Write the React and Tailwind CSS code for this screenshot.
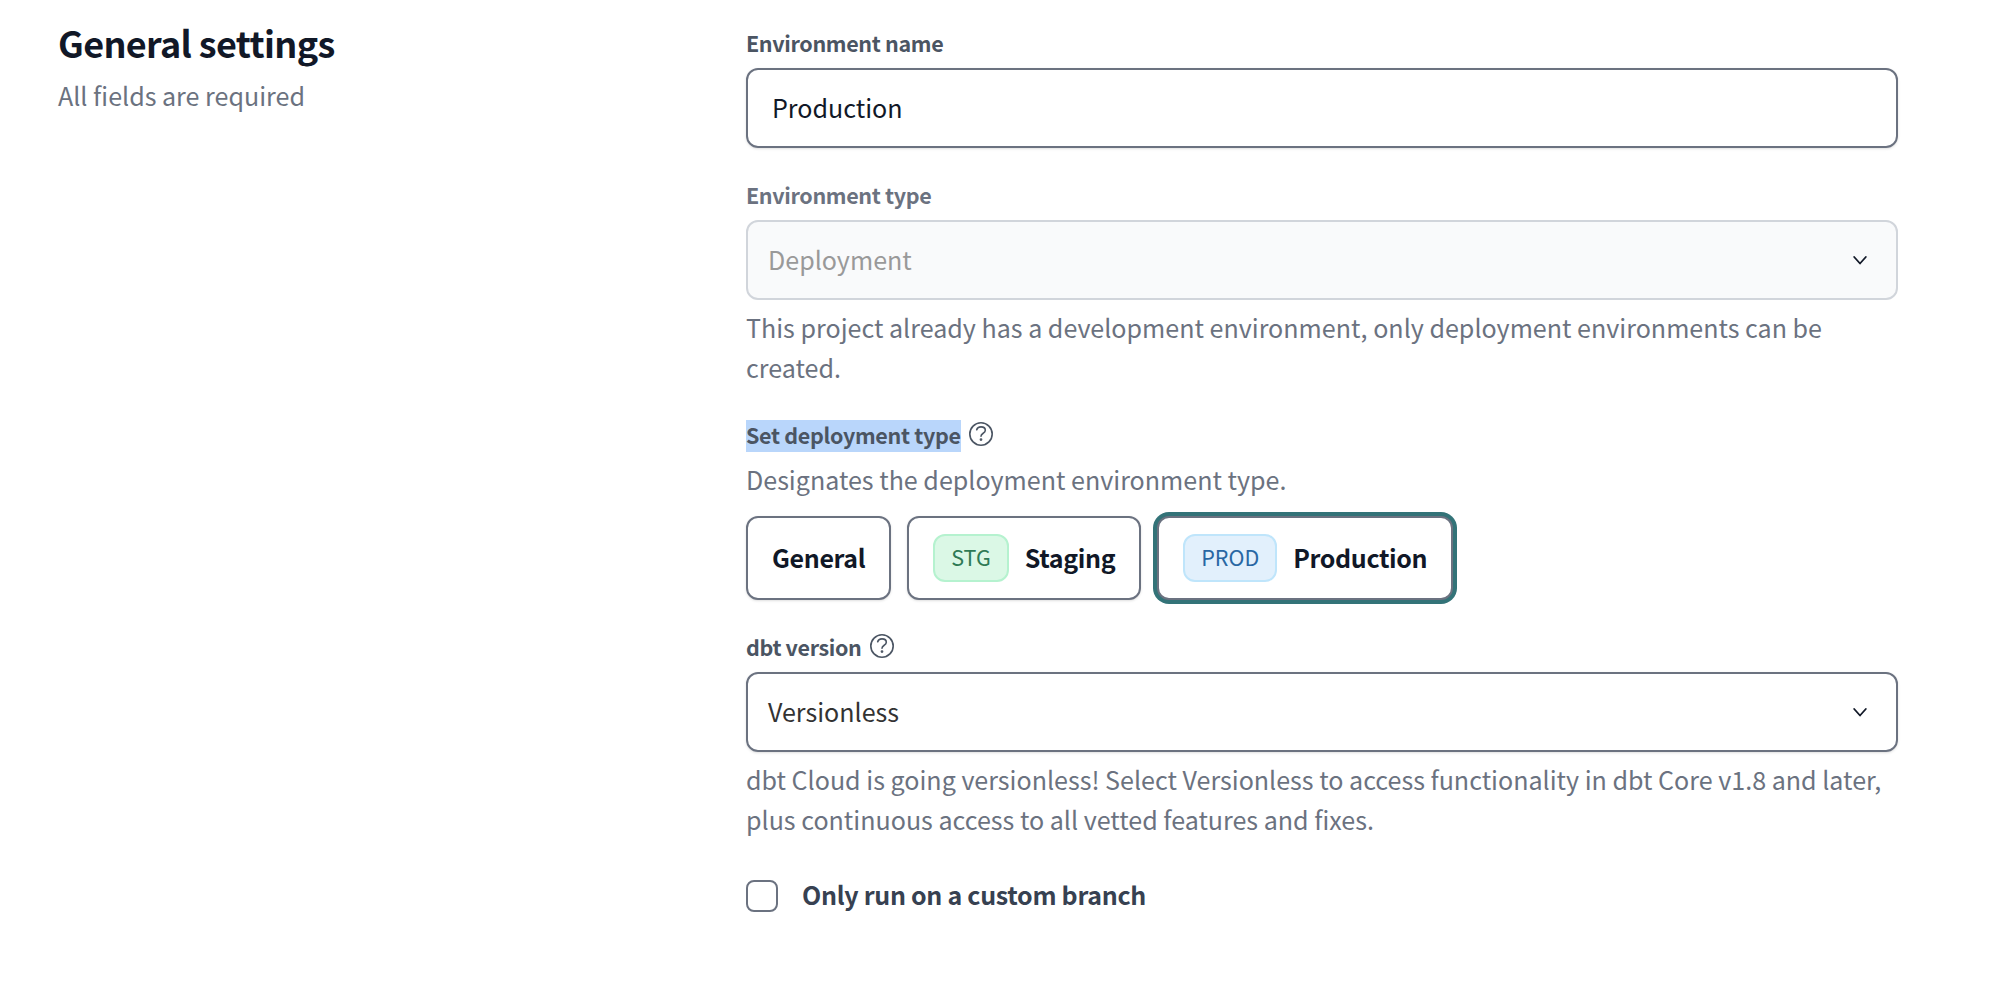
import { useState } from "react";

function HelpIcon() {
  return (
    <svg
      className="size-[24px] shrink-0 text-[#4b5563]"
      viewBox="0 0 24 24"
      fill="none"
      stroke="currentColor"
      strokeWidth="1.6"
      strokeLinecap="round"
      strokeLinejoin="round"
    >
      <circle cx="12" cy="12" r="11.2" />
      <path d="M7.700 7.800C8.200 5.800 9.800 4.900 12 4.900c2.500 0 4.300 1.200 4.300 3.400 0 3.200-4.300 2.600-4.300 5.900" />
      <circle cx="12" cy="17.600" r="0.6" fill="currentColor" />
    </svg>
  );
}

function Chevron() {
  return (
    <svg
      className="h-[10px] w-[14px] shrink-0 text-[#111827]"
      viewBox="0 0 14 10"
      fill="none"
      stroke="currentColor"
      strokeWidth="1.8"
      strokeLinecap="round"
      strokeLinejoin="round"
    >
      <path d="M1.200 2 7 8.500l5.800-6.500" />
    </svg>
  );
}

function Label({ children, className = "text-[#4b5563]" }) {
  return (
    <div className={`h-[40px] text-[21.5px] leading-[29px] font-bold tracking-[-0.35px] ${className}`}>
      {children}
    </div>
  );
}

function TypeButton({ label, badge, badgeClass, selected, onClick }) {
  return (
    <button
      type="button"
      onClick={onClick}
      className={`flex h-[84px] items-center gap-[16px] rounded-[12px] border-2 border-[#6b7280] bg-white px-[24px] text-[#111827] ${
        selected ? "ring-4 ring-[#337378]" : "shadow-sm"
      }`}
    >
      {badge && (
        <span
          className={`flex h-[48px] items-start rounded-[12px] border-2 px-[16px] text-[21.5px] leading-[41px] ${badgeClass}`}
        >
          {badge}
        </span>
      )}
      <span className="pb-[2px] text-[25px] leading-[40px] font-bold tracking-[-0.36px]">{label}</span>
    </button>
  );
}

export default function App() {
  const [type, setType] = useState("Production");
  const [checked, setChecked] = useState(false);

  return (
    <main className="flex h-[984px] w-[2002px] overflow-hidden bg-white pl-[58px] font-['Noto_Sans_CJK_SC',sans-serif] text-[#6b7280]">
      <section className="w-[688px] shrink-0 pt-[18px]">
        <h1 className="text-[36px] leading-[48px] font-bold tracking-[-0.66px] text-[#111827]">General settings</h1>
        <p className="mt-[9px] text-[25.07px] leading-[40px]">All fields are required</p>
      </section>

      <section className="w-[1152px] shrink-0 pt-[28px]">
        <Label>Environment name</Label>
        <div className="h-[80px] rounded-[12px] border-2 border-[#6b7280] px-[24px] text-[25.07px] leading-[74px] text-[#111827] shadow-sm">
          Production
        </div>

        <div className="mt-[32px]">
          <Label className="text-[#6b7280]">Environment type</Label>
          <div className="flex h-[80px] items-center justify-between rounded-[12px] border-2 border-[#d1d5db] bg-[#f9fafb] pr-[29px] pl-[20px]">
            <span className="pb-[2px] text-[25.07px] leading-[74px] text-[#999999]">Deployment</span>
            <Chevron />
          </div>
          <p className="mt-[7px] text-[25.07px] leading-[40px]">
            This project already has a development environment, only deployment environments can be
            <br />
            created.
          </p>
        </div>

        <div className="mt-[33px]">
          <div className="flex h-[39px] items-start gap-[8px]">
            <span className="h-[32px] w-[215px] bg-[#b9d6fb] text-[21.5px] leading-[29px] font-bold tracking-[-0.32px] whitespace-nowrap text-[#4b5563]">
              Set deployment type
            </span>
            <span className="pt-[2px]">
              <HelpIcon />
            </span>
          </div>
          <p className="text-[25.07px] leading-[40px]">Designates the deployment environment type.</p>
          <div className="mt-[17px] flex gap-[16px]">
            <TypeButton label="General" selected={type === "General"} onClick={() => setType("General")} />
            <TypeButton
              label="Staging"
              badge="STG"
              badgeClass="border-[#b5f2cf] bg-[#dbf8e6] text-[#2f7a55]"
              selected={type === "Staging"}
              onClick={() => setType("Staging")}
            />
            <TypeButton
              label="Production"
              badge="PROD"
              badgeClass="border-[#bfe5fb] bg-[#e2f0fc] text-[#2867a3]"
              selected={type === "Production"}
              onClick={() => setType("Production")}
            />
          </div>
        </div>

        <div className="mt-[32px]">
          <div className="flex items-start gap-[8px]">
            <Label>dbt version</Label>
            <span className="pt-[2px]">
              <HelpIcon />
            </span>
          </div>
          <div className="flex h-[80px] items-center justify-between rounded-[12px] border-2 border-[#6b7280] pr-[29px] pl-[20px] shadow-sm">
            <span className="pb-[2px] text-[25.07px] leading-[74px] text-[#333333]">Versionless</span>
            <Chevron />
          </div>
          <p className="mt-[7px] text-[25.07px] leading-[40px]">
            dbt Cloud is going versionless! Select Versionless to access functionality in dbt Core v1.8 and later,
            <br />
            plus continuous access to all vetted features and fixes.
          </p>
        </div>

        <label className="mt-[41px] flex items-start gap-[24px]">
          <input
            type="checkbox"
            checked={checked}
            onChange={(e) => setChecked(e.target.checked)}
            className="size-[32px] shrink-0 appearance-none rounded-[8px] border-2 border-[#6b7280] bg-white checked:bg-[#337378]"
          />
          <span className="text-[25px] leading-[28px] font-bold tracking-[-0.3px] text-[#374151]">
            Only run on a custom branch
          </span>
        </label>
      </section>
    </main>
  );
}
